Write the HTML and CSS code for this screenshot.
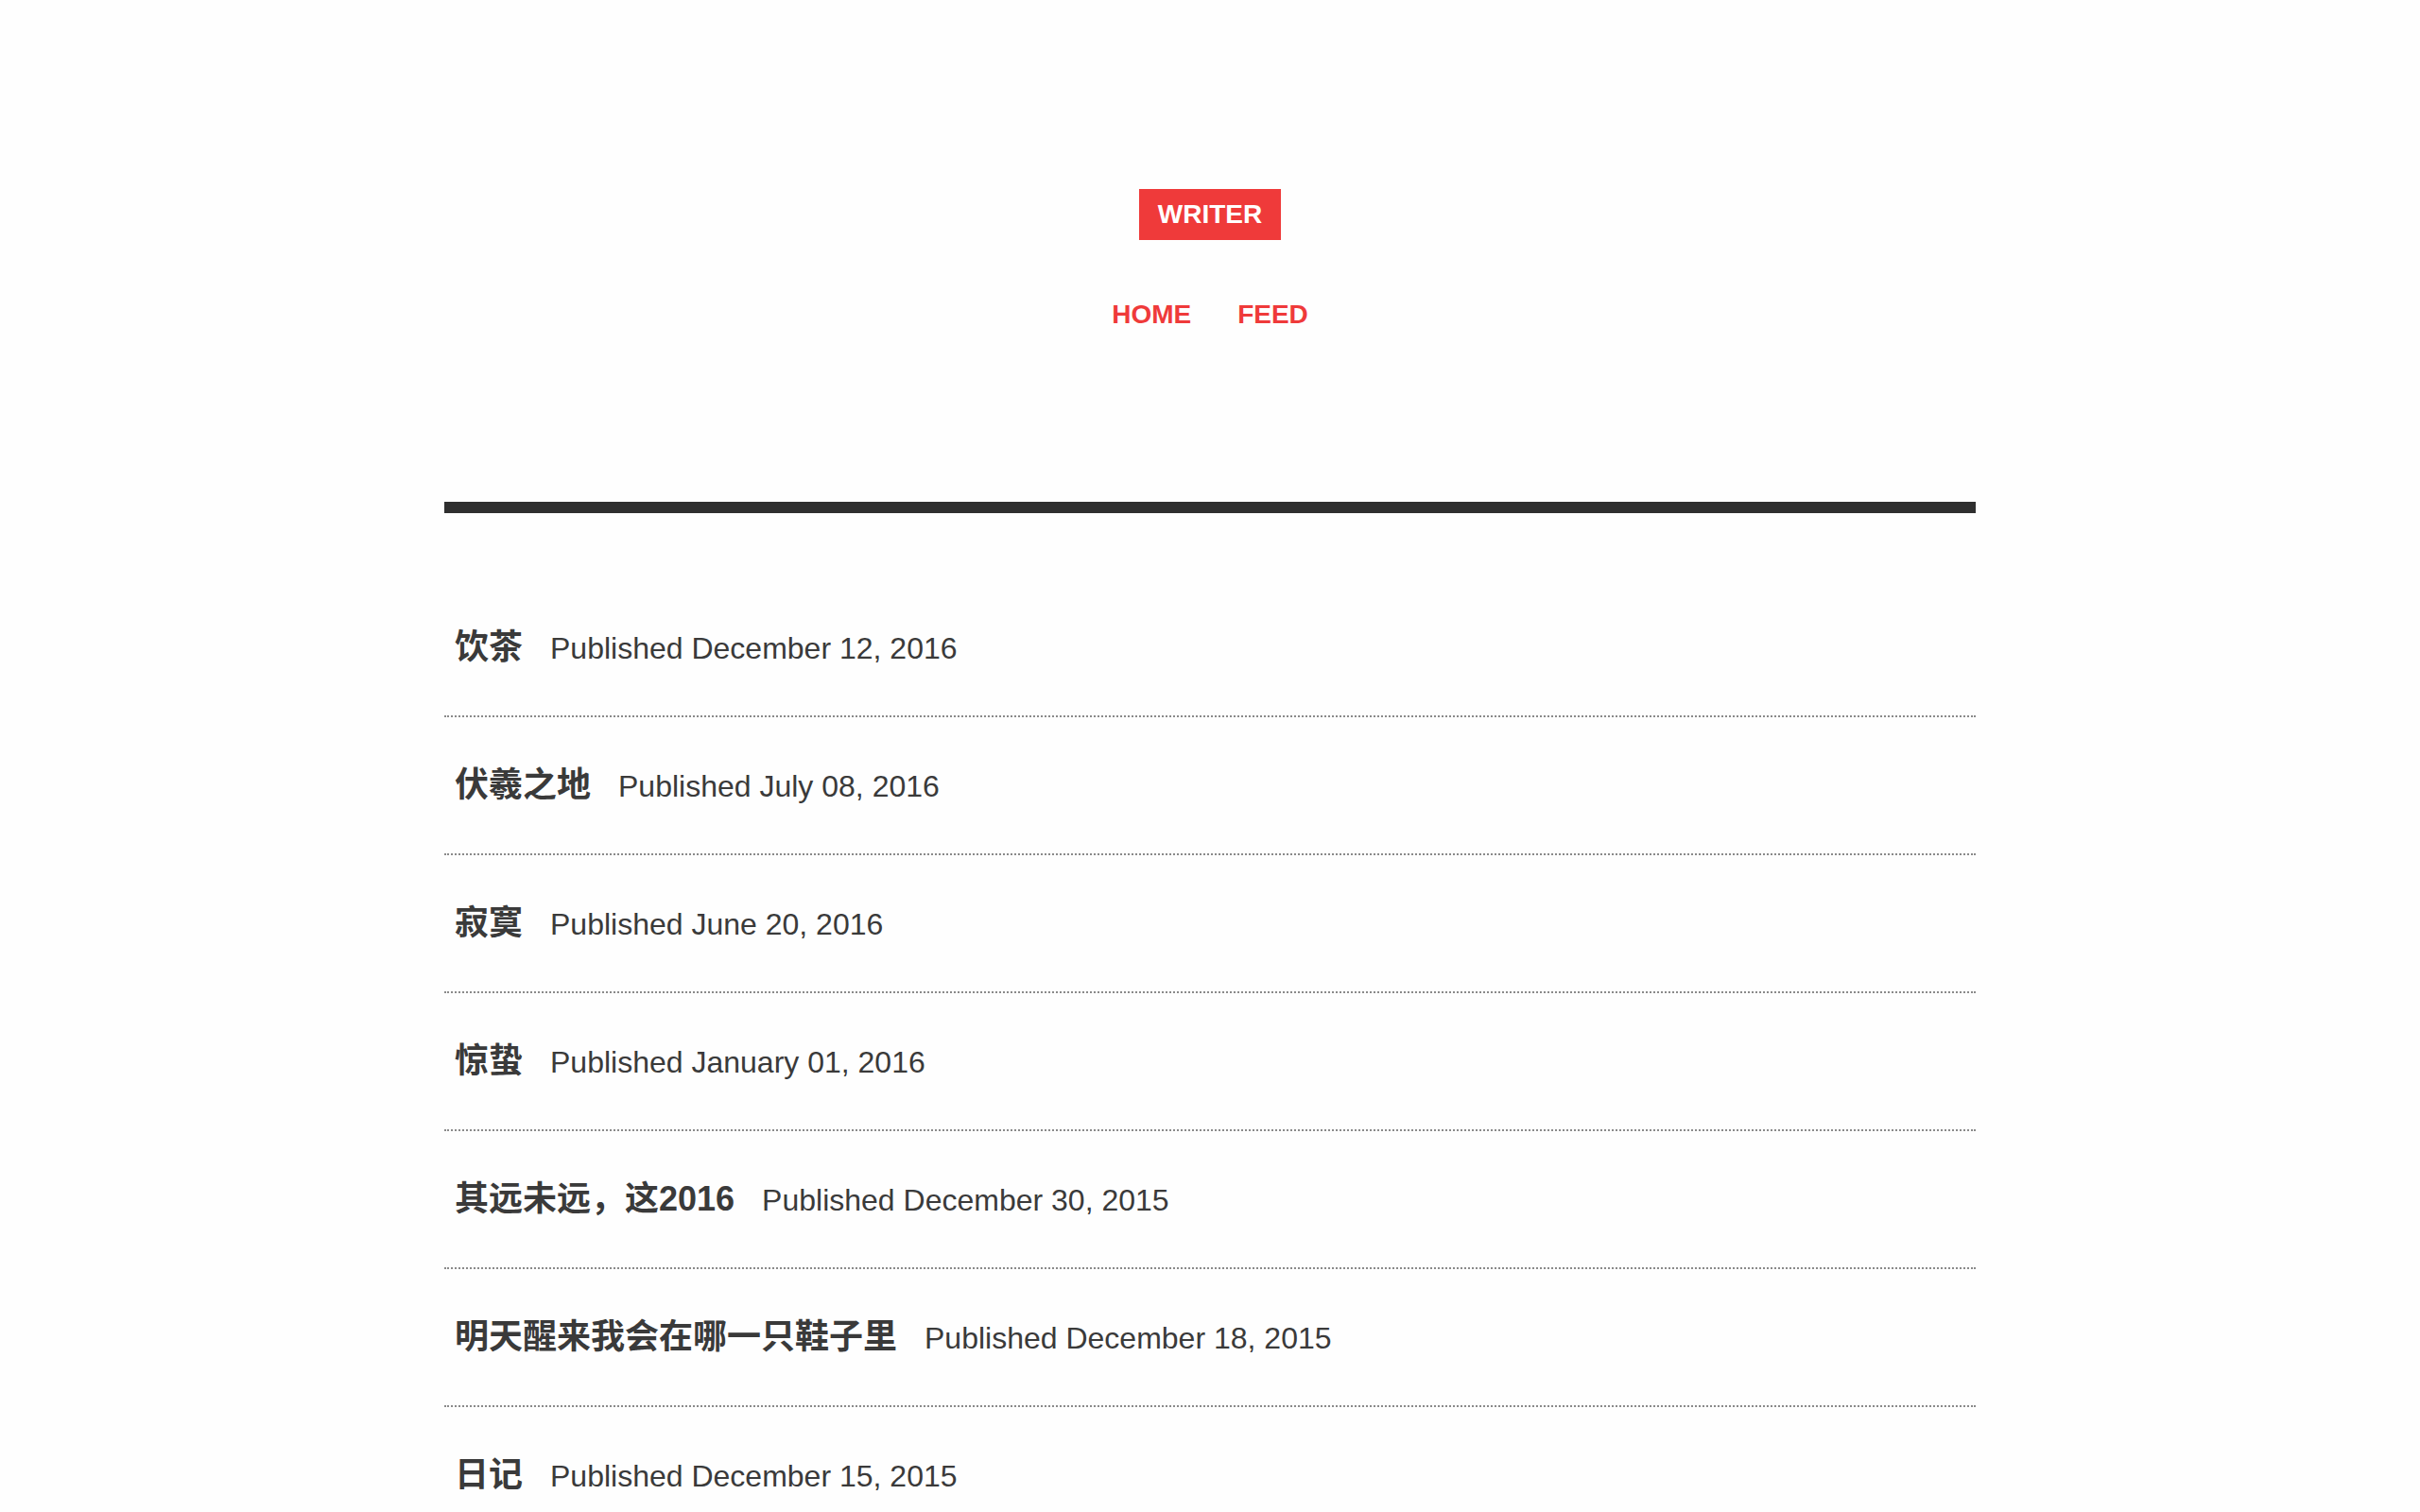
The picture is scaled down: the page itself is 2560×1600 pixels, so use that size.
FILE: index.html
```html
<!DOCTYPE html>
<html lang="zh-CN">
<head>
<meta charset="utf-8">
<title>Writer</title>
<link rel="stylesheet" href="styles.css">
</head>
<body>
<header class="site-header">
  <a class="logo" href="#">WRITER</a>
  <nav class="nav">
    <a href="#">HOME</a>
    <a href="#">FEED</a>
  </nav>
</header>
<main class="container">
  <hr class="rule">
  <ul class="posts">
    <li class="post"><a class="post-title" href="#">饮茶</a><span class="post-date">Published December 12, 2016</span></li>
    <li class="post"><a class="post-title" href="#">伏羲之地</a><span class="post-date">Published July 08, 2016</span></li>
    <li class="post"><a class="post-title" href="#">寂寞</a><span class="post-date">Published June 20, 2016</span></li>
    <li class="post"><a class="post-title" href="#">惊蛰</a><span class="post-date">Published January 01, 2016</span></li>
    <li class="post"><a class="post-title" href="#">其远未远，这2016</a><span class="post-date">Published December 30, 2015</span></li>
    <li class="post"><a class="post-title" href="#">明天醒来我会在哪一只鞋子里</a><span class="post-date">Published December 18, 2015</span></li>
    <li class="post"><a class="post-title" href="#">日记</a><span class="post-date">Published December 15, 2015</span></li>
  </ul>
</main>
</body>
</html>
```
FILE: styles.css
```css
html, body {
  margin: 0;
  padding: 0;
  background: #fefefe;
}
body {
  font-family: "Liberation Sans", "Noto Sans CJK SC", sans-serif;
  color: #3a3a3a;
}
a {
  text-decoration: none;
}
.site-header {
  padding-top: 200px;
  text-align: center;
}
.logo {
  display: inline-block;
  background: #ef3a3a;
  color: #fff;
  font-size: 28px;
  font-weight: bold;
  line-height: 34px;
  padding: 10px 20px;
}
.nav {
  margin-top: 62px;
  display: flex;
  justify-content: center;
  gap: 49px;
  line-height: 34px;
}
.nav a {
  color: #ef3a3a;
  font-size: 28px;
  font-weight: bold;
}
.container {
  width: 1620px;
  margin: 0 auto;
}
.rule {
  margin: 181px 0 0 0;
  border: 0;
  height: 12px;
  background: #2f2f2f;
}
.posts {
  list-style: none;
  margin: 70px 0 0 0;
  padding: 0;
}
.post {
  font-size: 32px;
  line-height: 48px;
  padding: 49px 10px 47px 11px;
  border-bottom: 2px dotted #8a8a8a;
}
.post-title {
  color: #3a3a3a;
  font-size: 36px;
  line-height: 1;
  font-weight: bold;
}
.post-date {
  margin-left: 29px;
  color: #3a3a3a;
}
```
